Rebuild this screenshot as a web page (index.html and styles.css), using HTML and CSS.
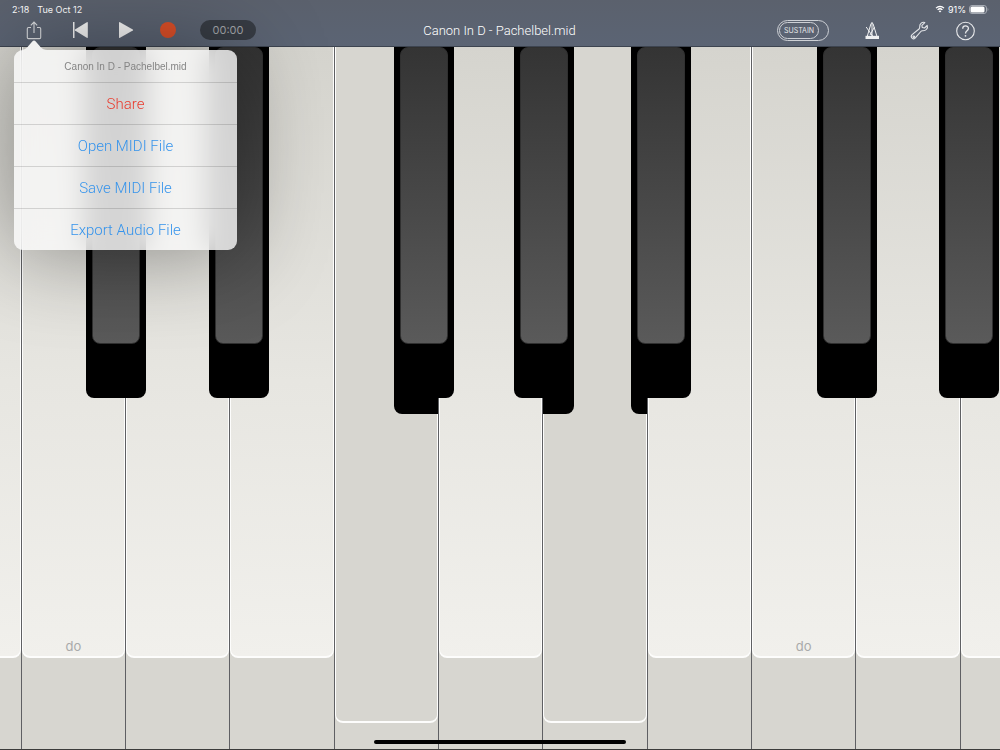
FILE: index.html
```
<!DOCTYPE html>
<html lang="en">
<head>
    <meta charset="UTF-8">
    <meta name="viewport" content="width=device-width, initial-scale=1.0">
    <title>Canon In D - Pachelbel.mid</title>
    <link rel="stylesheet" href="styles.css">
</head>
<body>
    <header class="header">
        <div class="status">
            <span class="clock">2:18</span>
            <span>Tue Oct 12</span>
            <div class="status-right">
                <svg width="10" height="8" viewBox="0 0 10 8" fill="none" stroke="#fff" stroke-width="1.3">
                    <path d="M1 3.1a5.8 5.8 0 0 1 8 0" />
                    <path d="M2.6 4.9a3.5 3.5 0 0 1 4.8 0" />
                    <path d="M5 7.6L3.7 6.2a1.9 1.9 0 0 1 2.6 0z" fill="#fff" stroke="none" />
                </svg>
                <span>91%</span>
                <svg width="20" height="9" viewBox="0 0 20 9">
                    <rect x="0.5" y="0.5" width="17" height="8" rx="2.5" fill="none" stroke="#a5aab3" />
                    <rect x="1.5" y="1.5" width="14" height="6" rx="1.5" fill="#fff" />
                    <path d="M18.6 3c1 .4 1 2.6 0 3z" fill="#a5aab3" />
                </svg>
            </div>
        </div>

        <div class="toolbar">
            <div class="tools tools-left">
                <div class="transport">
                    <button class="icon" aria-label="Share">
                        <svg width="20" height="22" viewBox="0 0 20 22" fill="none" stroke="#d9dbde" stroke-width="1.1">
                            <path d="M7 8.5H4.5Q3.3 8.5 3.3 9.7V18.4Q3.3 19.6 4.5 19.6H15.5Q16.7 19.6 16.7 18.4V9.7Q16.7 8.5 15.5 8.5H13" />
                            <path d="M10 14V3.3M6.8 6.3L10 3.1L13.2 6.3" />
                        </svg>
                    </button>
                    <button class="icon" aria-label="Back to start">
                        <svg width="20" height="22" viewBox="0 0 20 22" fill="#f4f4f4">
                            <path d="M3 3h1.5v16H3z" />
                            <path d="M17.8 3.7v14.6q0 1-1 .5L5 11.6q-.8-.6 0-1.2L16.8 3.2q1-.5 1 .5z" />
                        </svg>
                    </button>
                    <button class="icon" aria-label="Play">
                        <svg width="20" height="22" viewBox="0 0 20 22" fill="#f4f4f4">
                            <path d="M3 3.7v14.6q0 1 1 .5L16.8 11.6q.8-.6 0-1.2L4 3.2q-1-.5-1 .5z" />
                        </svg>
                    </button>
                </div>
                <button class="icon" aria-label="Record">
                    <span class="record"></span>
                </button>
                <span class="timer">00:00</span>
            </div>

            <h1 class="title">Canon In D - Pachelbel.mid</h1>

            <div class="tools tools-right">
                <button class="sustain"><span>SUSTAIN</span></button>
                <div class="settings">
                    <button class="icon" aria-label="Metronome">
                        <svg width="20" height="22" viewBox="0 0 20 22" fill="none" stroke="#f0f1f2" stroke-width="1">
                            <path d="M3.6 19.5L8 4.6Q9 2.8 10 4.6L14.6 19.5" />
                            <path d="M2.5 16.8h13.5v3.2H2.5z" fill="#f0f1f2" stroke="none" />
                            <path d="M9.5 17L3.2 8M9 3.5V17M11.5 8L7 16" />
                        </svg>
                    </button>
                    <button class="icon" aria-label="Settings">
                        <svg width="20" height="22" viewBox="0 0 20 22" fill="none" stroke="#e4e6e9" stroke-width="1.1" stroke-linejoin="round">
                            <path d="M15.8 3.6C13.3 2.6 10.4 4.6 10.7 8Q10.8 9.2 10 10L3.1 15.7C.9 17.5 3.7 21.6 6.1 19.1L11.8 12.5Q12.5 11.7 13.7 11.8C17 12 19.2 9.2 18.2 6.4L15.6 9L13.2 8.5L12.9 6.4Z" />
                            <circle cx="4.8" cy="17.8" r="0.8" />
                        </svg>
                    </button>
                    <button class="icon" aria-label="Help">
                        <svg width="20" height="22" viewBox="0 0 20 22" fill="none" stroke="#e8e9eb" stroke-width="1.1">
                            <circle cx="10.5" cy="12" r="8.8" />
                            <path d="M7.7 9.7C7.7 6 13.4 6.1 13.4 9.5C13.4 11.8 10.5 11.8 10.5 14.5" stroke-width="1.3" />
                            <circle cx="10.5" cy="16.8" r="0.9" fill="#e8e9eb" stroke="none" />
                        </svg>
                    </button>
                </div>
            </div>
        </div>
    </header>

    <main class="keyboard">
        <div class="slot slot-first"><button class="white" aria-label="ti"></button></div>
        <div class="slot"><button class="white">do</button></div>
        <div class="slot"><button class="white" aria-label="re"></button></div>
        <div class="slot"><button class="white" aria-label="mi"></button></div>
        <div class="slot">
            <button class="white pressed" aria-label="fa">
                <span class="cast cast-right cast-wide"></span>
            </button>
        </div>
        <div class="slot"><button class="white" aria-label="sol"></button></div>
        <div class="slot">
            <button class="white pressed" aria-label="la">
                <span class="cast cast-left"></span>
                <span class="cast cast-right"></span>
            </button>
        </div>
        <div class="slot"><button class="white" aria-label="ti"></button></div>
        <div class="slot"><button class="white">do</button></div>
        <div class="slot"><button class="white" aria-label="re"></button></div>
        <div class="slot slot-last"><button class="white" aria-label="mi"></button></div>

        <button class="black do-sharp" aria-label="do sharp"></button>
        <button class="black re-sharp" aria-label="re sharp"></button>
        <button class="black fa-sharp" aria-label="fa sharp"></button>
        <button class="black sol-sharp" aria-label="sol sharp"></button>
        <button class="black la-sharp" aria-label="la sharp"></button>
        <button class="black high-do-sharp" aria-label="do sharp"></button>
        <button class="black high-re-sharp" aria-label="re sharp"></button>
    </main>

    <div class="popover">
        <svg class="arrow" width="26" height="10" viewBox="0 0 26 10">
            <path d="M0 10Q4 10 6.5 7L11.5 1.2Q13 -.4 14.5 1.2L19.5 7Q22 10 26 10Z" fill="#f0f0f0" />
        </svg>
        <p class="popover-title">Canon In D - Pachelbel.mid</p>
        <button class="item share">Share</button>
        <button class="item">Open MIDI File</button>
        <button class="item">Save MIDI File</button>
        <button class="item">Export Audio File</button>
    </div>

    <div class="home-bar"></div>
</body>
</html>
```

FILE: styles.css
```
*,
*::before {
    box-sizing: border-box;
}

body {
    margin: 0;
    height: 100vh;
    display: flex;
    flex-direction: column;
    position: relative;
    overflow: hidden;
    font-family: Inter, "Liberation Sans", sans-serif;
    background: #3c3c3b;
}

button {
    padding: 0;
    border: none;
    background: none;
    font-family: inherit;
    cursor: pointer;
}

svg {
    display: block;
}

/* header */
.header {
    height: 47px;
    background: linear-gradient(#5b616d, #5b6474);
    border-bottom: 1px solid #3d4450;
    color: white;
}

.status {
    display: flex;
    align-items: center;
    height: 18px;
    padding: 0 11px 0 12px;
    font-size: 9px;
}

.clock {
    margin-right: 8px;
}

.status-right {
    display: flex;
    align-items: center;
    gap: 3px;
    margin-left: auto;
}

.toolbar {
    display: grid;
    grid-template-columns: 1fr auto 1fr;
    align-items: center;
    height: 24px;
    padding: 0 25px 0 24px;
}

.tools {
    display: flex;
    align-items: center;
}

.tools-left {
    gap: 22px;
}

.tools-right {
    justify-content: flex-end;
    gap: 34px;
}

.transport,
.settings {
    display: flex;
    gap: 26px;
}

.icon {
    display: flex;
    align-items: center;
    justify-content: center;
    width: 20px;
    height: 22px;
}

.record {
    width: 16px;
    height: 16px;
    border-radius: 50%;
    background: #dc4f28;
}

.timer {
    width: 56px;
    height: 20px;
    border-radius: 10px;
    background: #373c44;
    color: #a2a5a9;
    font-size: 11px;
    line-height: 20px;
    text-align: center;
}

.title {
    margin: 0;
    padding-top: 2px;
    font-family: Roboto, "Liberation Sans", sans-serif;
    font-size: 13px;
    font-weight: 300;
    line-height: 22px;
}

.sustain {
    width: 52px;
    height: 21px;
    padding: 1px;
    border: 1px solid #cdd0d5;
    border-radius: 11px;
    color: #e3e5e8;
    font-size: 7px;
}

.sustain span {
    display: block;
    width: 40px;
    height: 17px;
    border: 1px solid #cdd0d5;
    border-radius: 9px;
    line-height: 15px;
}

/* keyboard */
.keyboard {
    flex: 1;
    display: flex;
    position: relative;
    margin-bottom: 1px;
}

.slot {
    flex: 1;
    border-right: 1px solid #5f6063;
    background: #d7d6d0;
}

.slot-first {
    flex-grow: 0.2;
}

.slot-last {
    flex-grow: 0.38;
    border-right: none;
}

.white {
    display: flex;
    align-items: flex-end;
    justify-content: center;
    position: relative;
    width: 100%;
    height: 87%;
    padding-bottom: 2px;
    border: solid #fdfdfc;
    border-width: 0 1px 2px;
    border-radius: 0 0 8px 8px;
    background: linear-gradient(#d5d4ce, #e7e6e1 55%, #f1f0ec);
    color: #a9aaaa;
    font-size: 13px;
}

.slot-first .white {
    border-left: none;
    border-bottom-left-radius: 0;
}

.slot-last .white {
    border-right: none;
    border-bottom-right-radius: 0;
}

.white.pressed {
    height: 96.3%;
    background: #d7d6d0;
}

.black {
    position: absolute;
    top: 0;
    width: 6%;
    height: 50%;
    border-radius: 0 0 8px 8px;
    background: #000;
}

.black::before {
    content: "";
    position: absolute;
    top: 0;
    left: 10%;
    right: 10%;
    height: 84.5%;
    border: 1px solid #303030;
    border-radius: 8px;
    background: linear-gradient(#343434, #5a5a5a);
}

/* lower end of a black key seen beside a pressed white one */
.cast {
    position: absolute;
    top: 0;
    height: 54.5%;
    background: #000;
}

.cast-left {
    left: -1px;
    width: 30%;
    border-bottom-right-radius: 8px;
}

.cast-right {
    right: -1px;
    width: 16%;
    border-bottom-left-radius: 8px;
}

.cast-wide {
    width: 43%;
}

.do-sharp { left: 8.6%; }
.re-sharp { left: 20.9%; }
.fa-sharp { left: 39.4%; }
.sol-sharp { left: 51.4%; }
.la-sharp { left: 63.1%; }
.high-do-sharp { left: 81.7%; }
.high-re-sharp { left: 93.9%; }

/* file menu */
.popover {
    position: absolute;
    top: 50px;
    left: 14px;
    width: 223px;
    border-radius: 9px;
    background: rgba(249, 249, 249, 0.8);
    backdrop-filter: blur(14px);
    box-shadow: 0 0 90px rgba(0, 0, 0, 0.4);
}

.arrow {
    position: absolute;
    top: -10px;
    left: 7px;
}

.popover-title {
    margin: 0;
    padding-top: 2px;
    color: #858585;
    font-family: "Liberation Sans", sans-serif;
    font-size: 10px;
    line-height: 30px;
    text-align: center;
}

.item {
    display: block;
    width: 100%;
    height: 42px;
    border-top: 1px solid rgba(0, 0, 0, 0.14);
    color: #3694ec;
    font-family: Roboto, "Liberation Sans", sans-serif;
    font-size: 15px;
    font-weight: 300;
}

.share {
    color: #ea3a2c;
}

.home-bar {
    position: absolute;
    bottom: 6px;
    left: 50%;
    width: 252px;
    height: 4px;
    margin-left: -126px;
    border-radius: 2px;
    background: #000;
}
```
